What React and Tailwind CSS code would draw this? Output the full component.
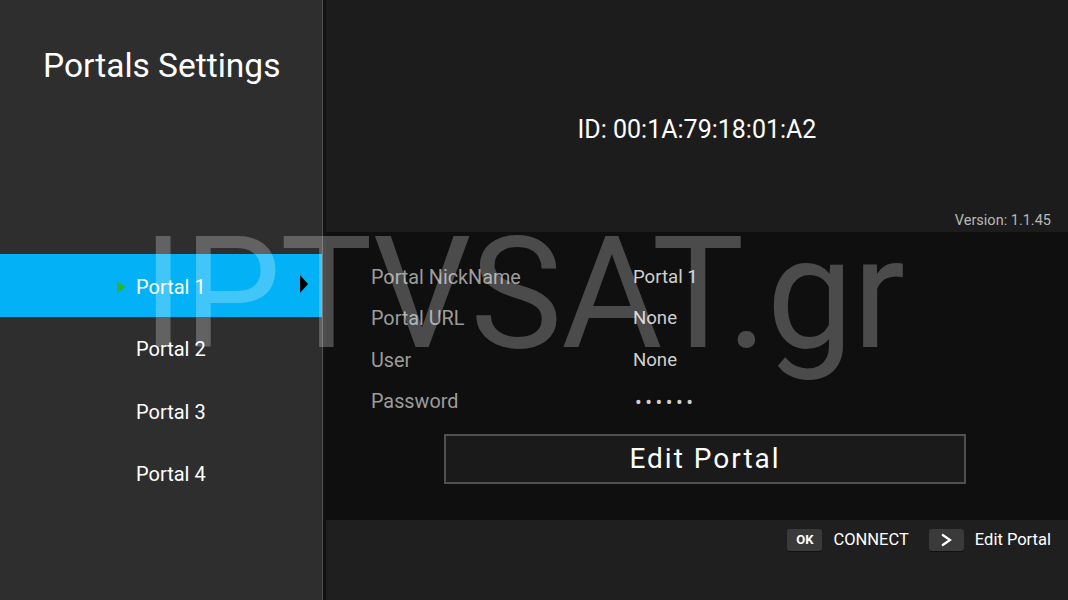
import React from 'react';

const portals = ['Portal 1', 'Portal 2', 'Portal 3', 'Portal 4'];

const details = [
  { label: 'Portal NickName', value: 'Portal 1' },
  { label: 'Portal URL', value: 'None' },
  { label: 'User', value: 'None' },
  { label: 'Password', value: '••••••' },
];

function KeyCap({ children }) {
  return (
    <span className="flex h-[22px] w-[35px] items-center justify-center rounded-[3px] bg-[#3a3a3a] text-[13px] font-bold text-white shadow-[0_1px_0_#111]">
      {children}
    </span>
  );
}

export default function App() {
  return (
    <div className="relative flex h-[600px] w-[1068px] overflow-hidden bg-[#1c1c1c] font-['Roboto',sans-serif] text-white">
      {/* Sidebar */}
      <aside className="flex w-[322px] shrink-0 flex-col bg-[#2e2e2e]">
        <h1 className="pl-[43px] pt-[46px] text-[33.5px] leading-[40px] text-white">Portals Settings</h1>
        <ul className="mt-[168px] flex flex-col">
          {portals.map((p, i) => (
            <li
              key={p}
              className={`relative flex h-[62.5px] items-center pl-[136px] pt-[3px] text-[20px] ${
                i === 0 ? 'bg-[#03b2f6] text-white' : 'text-white'
              }`}
            >
              {i === 0 && (
                <>
                  <span className="absolute left-[117px] top-[27px] h-0 w-0 border-y-[6px] border-l-[9px] border-y-transparent border-l-[#27b53a]" />
                  <span className="absolute right-[14px] top-[21px] h-0 w-0 border-y-[9px] border-l-[8px] border-y-transparent border-l-black" />
                </>
              )}
              {p}
            </li>
          ))}
        </ul>
      </aside>

      {/* Divider */}
      <div className="w-px shrink-0 bg-[#505050]" />
      <div className="w-[3px] shrink-0 bg-[#121212]" />

      {/* Main */}
      <main className="flex flex-1 flex-col">
        <section className="relative flex h-[232px] flex-col bg-[#1c1c1c]">
          <div className="pt-[113px] text-center text-[25px] leading-[34px]">ID: 00:1A:79:18:01:A2</div>
          <div className="mt-auto pb-[1px] pr-[17px] text-right text-[14.5px] leading-[20px] text-[#b8b8b8]">Version: 1.1.45</div>
        </section>

        <section className="flex h-[288px] flex-col bg-[#0f0f0f] pt-[25px]">
          {details.map((d) => (
            <div key={d.label} className="flex h-[41.5px] items-center pl-[45px]">
              <span className="w-[262px] text-[19.8px] text-[#9c9c9c]">{d.label}</span>
              <span
                className={
                  d.label === 'Password'
                    ? 'pl-[2px] text-[20px] tracking-[3.5px] text-[#cfcfcf]'
                    : 'text-[18.6px] text-[#cfcfcf]'
                }
              >
                {d.value}
              </span>
            </div>
          ))}
          <div className="ml-[118px] mt-[11px] flex h-[50px] w-[522px] items-center justify-center border-2 border-[#505050] bg-[#1a1a1a] text-[28px] tracking-[2px] text-white">
            Edit Portal
          </div>
        </section>

        <section className="flex flex-1 justify-end gap-[11px] bg-[#1f1f1f] pr-[17px] pt-[9px]">
          <div className="flex h-[22px] items-center gap-[11px]">
            <KeyCap>OK</KeyCap>
            <span className="text-[16.5px]">CONNECT</span>
          </div>
          <div className="ml-[9px] flex h-[22px] items-center gap-[11px]">
            <KeyCap>
              <svg width="12" height="14" viewBox="0 0 12 14" fill="none" stroke="white" strokeWidth="2.2">
                <path d="M2 1.5 L10 7 L2 12.5" />
              </svg>
            </KeyCap>
            <span className="text-[16.5px]">Edit Portal</span>
          </div>
        </section>
      </main>

      {/* Watermark */}
      <div className="pointer-events-none absolute left-[142px] top-[217px] text-[155px] leading-none tracking-[-1px] text-white/25">
        IPTVSAT.gr
      </div>
    </div>
  );
}
